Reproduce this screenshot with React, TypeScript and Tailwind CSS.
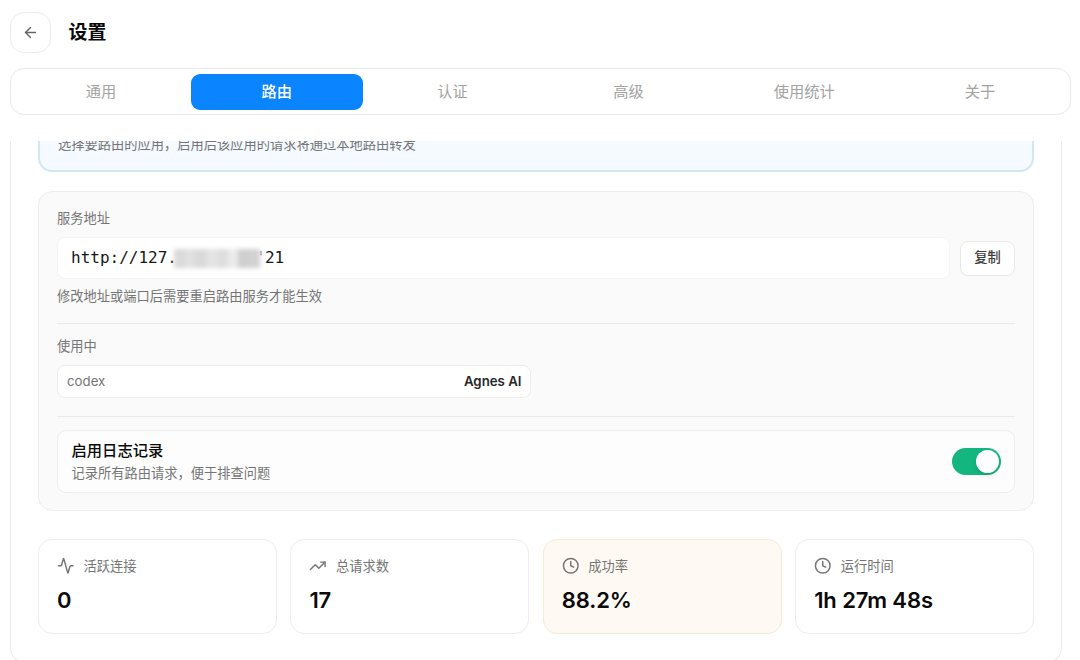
import React, { useState } from 'react';
import { Activity, ArrowLeft, Clock, TrendingUp } from 'lucide-react';
import clsx from 'clsx';

const TABS = ['通用', '路由', '认证', '高级', '使用统计', '关于'];

interface StatCardProps {
  icon: React.ElementType;
  label: string;
  value: string;
  highlight?: boolean;
}

const StatCard: React.FC<StatCardProps> = ({ icon: Icon, label, value, highlight }) => (
  <div
    className={clsx(
      'h-[95px] rounded-[14px] border px-[18px] pt-[17px]',
      highlight ? 'border-[#f6ebd3] bg-[#fef9f3]' : 'border-[#ededed] bg-white'
    )}
  >
    <div className="flex h-[18px] items-center gap-[9px] text-[#757575]">
      <Icon className="h-[17.5px] w-[17.5px]" strokeWidth={2} />
      <span className="text-[13.25px] leading-[18px]">{label}</span>
    </div>
    <p className="mt-[10px] text-[22px] leading-[30px] font-semibold tracking-[-0.1px] text-[#0a0a0a]">{value}</p>
  </div>
);

const Switch: React.FC<{ checked: boolean; onChange: (value: boolean) => void }> = ({ checked, onChange }) => (
  <button
    role="switch"
    aria-checked={checked}
    onClick={() => onChange(!checked)}
    className={clsx(
      'flex h-[27px] w-[49px] items-center rounded-full px-[2px]',
      checked ? 'justify-end bg-[#14b67f]' : 'justify-start bg-gray-300'
    )}
  >
    <span className="h-[23px] w-[23px] rounded-full bg-white shadow-md" />
  </button>
);

export default function App() {
  const [activeTab, setActiveTab] = useState('路由');
  const [logging, setLogging] = useState(true);

  return (
    <div className="flex h-[660px] w-[1080px] flex-col overflow-hidden bg-white font-[Inter,'Noto_Sans_CJK_SC',sans-serif] text-[#0a0a0a]">
      <header className="flex h-[68px] shrink-0 items-start gap-[18px] pt-3 pl-[9.5px]">
        <button className="flex h-[41px] w-[41px] items-center justify-center rounded-[14px] border border-[#ebebeb] text-[#666]">
          <ArrowLeft className="h-[17px] w-[17px]" strokeWidth={2} />
        </button>
        <h1 className="text-[19px] leading-[42px] font-semibold">设置</h1>
      </header>

      <nav className="ml-[10px] grid h-[47px] w-[1061px] shrink-0 grid-cols-6 gap-[4px] rounded-[14px] border border-[#e9e9e9] p-[4px]">
        {TABS.map((tab) => (
          <button
            key={tab}
            onClick={() => setActiveTab(tab)}
            className={clsx(
              'my-[0.5px] rounded-[9px] text-[15.25px] leading-[22px]',
              tab === activeTab ? 'bg-[#0a84ff] font-medium text-white' : 'text-[#a3a3a3]'
            )}
          >
            {tab}
          </button>
        ))}
      </nav>

      <main className="mt-[26px] h-[519px] shrink-0 overflow-hidden">
        <div className="ml-[10px] h-[521px] w-[1052px] rounded-b-[14px] border border-t-0 border-[#ebebeb] px-[27px]">
          <div className="h-[31px] overflow-hidden rounded-b-[14px] border-2 border-t-0 border-[#d3e6f7] bg-[#f4faff] pl-[18px]">
            <p className="mt-[-7px] text-[13.25px] leading-[20px] text-[#757575]">
              选择要路由的应用，启用后该应用的请求将通过本地路由转发
            </p>
          </div>

          <section className="mt-[19px] h-[320px] rounded-[14px] border border-[#ededed] bg-[#fafafa] px-[18px] pt-[16px]">
            <p className="text-[13.25px] leading-[20px] text-[#757575]">服务地址</p>
            <div className="mt-[9px] flex items-center gap-[10px]">
              <div className="flex h-[42px] flex-1 items-center rounded-[8px] border border-[#f5f5f5] bg-white pl-[13px] font-['DejaVu_Sans_Mono',monospace] text-[16px] text-[#171717]">
                <span>http://127.</span>
                {/* masked part of the address */}
                <span className="-ml-[3px] grid h-[19px] w-[86px] grid-cols-8 blur-[2px]">
                  <span className="bg-[#dadada]" />
                  <span className="bg-[#e0e0e0]" />
                  <span className="bg-[#d9d9d9]" />
                  <span className="bg-[#e3e3e3]" />
                  <span className="bg-[#dedede]" />
                  <span className="bg-[#ebebeb]" />
                  <span className="bg-[#cfcfcf]" />
                  <span className="bg-[#d2d2d2]" />
                </span>
                <span className="-ml-[4px] w-[9px] text-[#8a8a8a]">'</span>
                <span>21</span>
              </div>
              <button className="h-[35px] w-[55px] rounded-[8px] border border-[#e9e9e9] bg-white text-[13.25px] font-medium text-[#3d3d3d]">
                复制
              </button>
            </div>
            <p className="mt-[7px] text-[13.25px] leading-[20px] text-[#757575]">
              修改地址或端口后需要重启路由服务才能生效
            </p>

            <div className="mt-[17px] border-t border-[#e9e9e9] pt-[12px]">
              <p className="text-[13.25px] leading-[20px] text-[#757575]">使用中</p>
              <div className="mt-[9px] flex h-[33px] w-[474px] items-center justify-between rounded-[8px] border border-[#ededed] bg-white px-[9px] text-[13.25px]">
                <span className="text-[#757575]">codex</span>
                <span className="-mr-[0.5px] font-semibold text-[#262626]">Agnes AI</span>
              </div>
            </div>

            <div className="mt-[18px] border-t border-[#e9e9e9] pt-[13px]">
              <div className="flex h-[63px] items-center justify-between rounded-[9px] border border-[#eee] bg-[#fdfdfd] px-[13px]">
                <div className="pt-[1px] pl-[0.5px]">
                  <p className="text-[15.3px] leading-[22px] font-medium">启用日志记录</p>
                  <p className="text-[13.25px] leading-[22px] text-[#757575]">
                    记录所有路由请求，便于排查问题
                  </p>
                </div>
                <Switch checked={logging} onChange={setLogging} />
              </div>
            </div>
          </section>

          <section className="mt-[28px] grid grid-cols-4 gap-[13.5px]">
            <StatCard icon={Activity} label="活跃连接" value="0" />
            <StatCard icon={TrendingUp} label="总请求数" value="17" />
            <StatCard icon={Clock} label="成功率" value="88.2%" highlight />
            <StatCard icon={Clock} label="运行时间" value="1h 27m 48s" />
          </section>
        </div>
      </main>
    </div>
  );
}
